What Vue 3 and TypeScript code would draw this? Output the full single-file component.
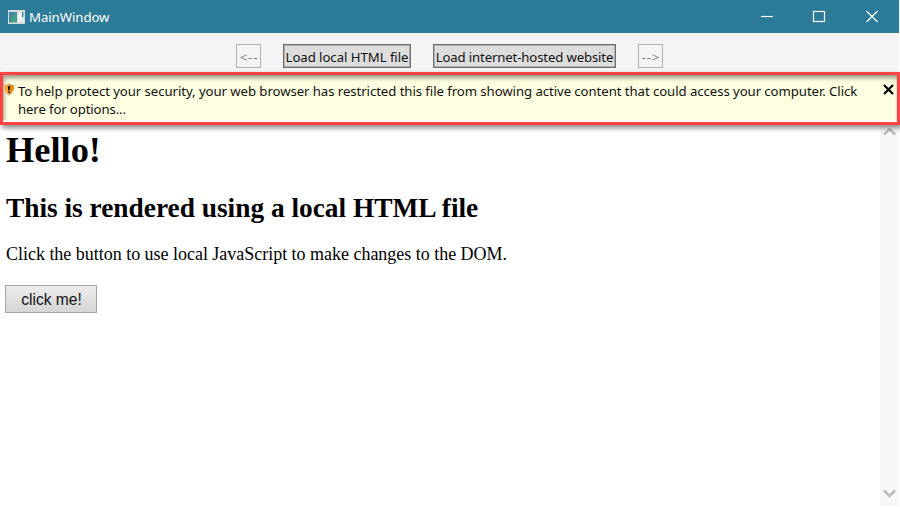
<script setup lang="ts">
import { ref } from 'vue'

const title = 'MainWindow'
const barVisible = ref<boolean>(true)
</script>

<template>
  <div class="window">
    <header class="titlebar">
      <svg class="app-icon" width="17" height="14" viewBox="0 0 17 14">
        <defs>
          <linearGradient id="pane" x1="0" y1="0" x2="1" y2="1">
            <stop offset="0" stop-color="#3b78a8" />
            <stop offset="1" stop-color="#4fae7b" />
          </linearGradient>
        </defs>
        <rect width="17" height="14" fill="#d5dcdf" />
        <rect x="1" y="2" width="8" height="10.5" fill="url(#pane)" />
        <rect x="10" y="2" width="3" height="10" fill="#f4f4f4" />
        <rect x="13" y="2" width="3" height="10" fill="#e9eced" />
        <rect x="14" y="2" width="1.5" height="5" fill="#3787a5" />
      </svg>
      <span class="title">{{ title }}</span>
      <svg class="controls" width="118" height="14" viewBox="0 0 118 14" fill="none" stroke="#fff" stroke-width="1.2">
        <path d="M0 6.5H12" />
        <rect x="52.5" y="1.5" width="11" height="10" />
        <path d="M105.5 1L116.5 12M116.5 1L105.5 12" />
      </svg>
    </header>

    <nav class="toolbar">
      <button class="tool nav" disabled><span>&lt;--</span></button>
      <button class="tool local"><span>Load local HTML file</span></button>
      <button class="tool hosted"><span>Load internet-hosted website</span></button>
      <button class="tool nav" disabled><span>--&gt;</span></button>
    </nav>

    <section v-if="barVisible" class="notice">
      <div class="notice-body">
        <svg class="shield" width="12" height="13" viewBox="0 0 12 13">
          <path d="M6 .3Q8 1.8 11.5 2Q11.9 9 6 12.8Q.1 9 .5 2Q4 1.8 6 .3Z" fill="#c9c5ae" />
          <path d="M6 1.1Q8 2.5 10.8 2.7Q11 8.5 6 11.9Z" fill="#e98a10" />
          <path d="M6 1.1Q4 2.5 1.2 2.7Q1 8.5 6 11.9Z" fill="#f8ac38" />
          <path d="M4.7 3H7.2L6.6 7.6H5.2ZM5.1 8.4H6.7V10H5.1Z" fill="#241b0c" />
        </svg>
        <p class="notice-text">
          <span class="line">To help protect your security, your web browser has restricted this file from showing active content that could access your computer. Click</span>
          <span class="line second">here for options...</span>
        </p>
        <svg class="dismiss" width="11" height="11" viewBox="0 0 11 11" @click="barVisible = false">
          <path d="M1 1L10 10M10 1L1 10" stroke="#000" stroke-width="2.2" />
        </svg>
      </div>
    </section>

    <main class="viewport">
      <article class="page">
        <h1><span>Hello!</span></h1>
        <h2><span>This is rendered using a local HTML file</span></h2>
        <p class="hint"><span>Click the button to use local JavaScript to make changes to the DOM.</span></p>
        <button class="click"><span>click me!</span></button>
      </article>
      <aside class="scrollbar">
        <svg width="13" height="9" viewBox="0 0 13 9" fill="none" stroke="#bdbdbd" stroke-width="2.6">
          <path d="M1 7.5L6.5 2L12 7.5" />
        </svg>
        <svg width="13" height="9" viewBox="0 0 13 9" fill="none" stroke="#bdbdbd" stroke-width="2.6">
          <path d="M1 1.5L6.5 7L12 1.5" />
        </svg>
      </aside>
    </main>
  </div>
</template>

<style>
body {
  margin: 0;
  background: #fff;
  overflow: hidden;
}
</style>

<style scoped>
.window {
  display: flex;
  flex-direction: column;
  width: 900px;
  height: 507px;
  overflow: hidden;
  font-family: 'Noto Sans', 'Open Sans', sans-serif;
  font-size: 13.2px;
  color: #111;
}
button {
  box-sizing: border-box;
  padding: 0;
  margin: 0;
  white-space: nowrap;
}
.titlebar {
  box-sizing: border-box;
  display: flex;
  align-items: center;
  width: 899px;
  height: 33px;
  padding: 1px 20px 0 8px;
  background: #2c7b98;
  color: #fff;
}
.title {
  margin: -1px 0 0 4px;
  letter-spacing: -0.05px;
}
.controls {
  margin-left: auto;
}
.toolbar {
  box-sizing: border-box;
  display: flex;
  width: 899px;
  height: 39px;
  padding: 11px 0 0 236px;
  background: #f4f4f4;
}
.tool {
  height: 24px;
  padding-top: 1px;
  border: 1px solid #707070;
  box-shadow: inset 0 0 0 0.5px #858585;
  background: #ddd;
  font: 13.2px/21px 'Noto Sans', 'Open Sans', sans-serif;
  color: #111;
}
.tool span {
  display: block;
  padding-top: 1px;
}
.nav {
  width: 25px;
  border-color: #adb2b5;
  box-shadow: none;
  background: #f4f4f4;
  color: #838383;
  letter-spacing: 0.8px;
}
.nav span {
  padding-left: 1px;
}
.local {
  width: 128px;
  margin-left: 22px;
  letter-spacing: -0.05px;
}
.hosted {
  width: 183px;
  margin: 0 22px;
  letter-spacing: -0.15px;
}
.notice {
  position: relative;
  z-index: 1;
  box-sizing: border-box;
  width: 900px;
  height: 53px;
  flex: none;
  padding-bottom: 2px;
  border: 3px solid #ff4343;
  background: #fff;
  box-shadow: 2px 3px 5px rgba(0, 0, 0, 0.45);
}
.notice-body {
  display: flex;
  align-items: flex-start;
  height: 45px;
  background: #ffffe1;
  box-shadow: inset 2px 4px 4px -1px rgba(0, 0, 0, 0.4), inset -2px 0 2px -1px rgba(0, 0, 0, 0.12);
}
.shield {
  flex: none;
  margin-top: 8px;
}
.notice-text {
  flex: 1;
  margin: 7px 0 0 3px;
  line-height: 18px;
}
.line {
  display: block;
  white-space: nowrap;
  letter-spacing: -0.07px;
}
.second {
  letter-spacing: -0.13px;
}
.dismiss {
  flex: none;
  margin: 9px 3px 0 0;
}
.viewport {
  display: flex;
  width: 899px;
  height: 381px;
}
.page {
  flex: 1;
  padding-left: 6px;
  font-family: 'Liberation Serif', serif;
  font-size: 18px;
  color: #000;
}
h1 {
  margin: 4px 0 0;
  font-size: 36.4px;
  line-height: 42px;
}
h2 {
  margin: 21px 0 0;
  font-size: 27.4px;
  line-height: 32px;
  letter-spacing: -0.02px;
}
.hint {
  margin: 19px 0 0;
  line-height: 22px;
  letter-spacing: -0.02px;
}
.click {
  display: block;
  width: 92px;
  height: 28px;
  margin: 20px 0 0 -1px;
  border: 1px solid #a5a5a5;
  background: linear-gradient(#ececec, #d5d5d5);
  font: 15.6px/26px 'Liberation Sans', sans-serif;
  color: #111;
}
.click span {
  display: block;
  padding: 1px 0 0 1px;
}
.scrollbar {
  box-sizing: border-box;
  display: flex;
  flex-direction: column;
  justify-content: space-between;
  align-items: center;
  width: 19px;
  padding: 2px 0 8px;
  background: #f8f8f8;
}
</style>
